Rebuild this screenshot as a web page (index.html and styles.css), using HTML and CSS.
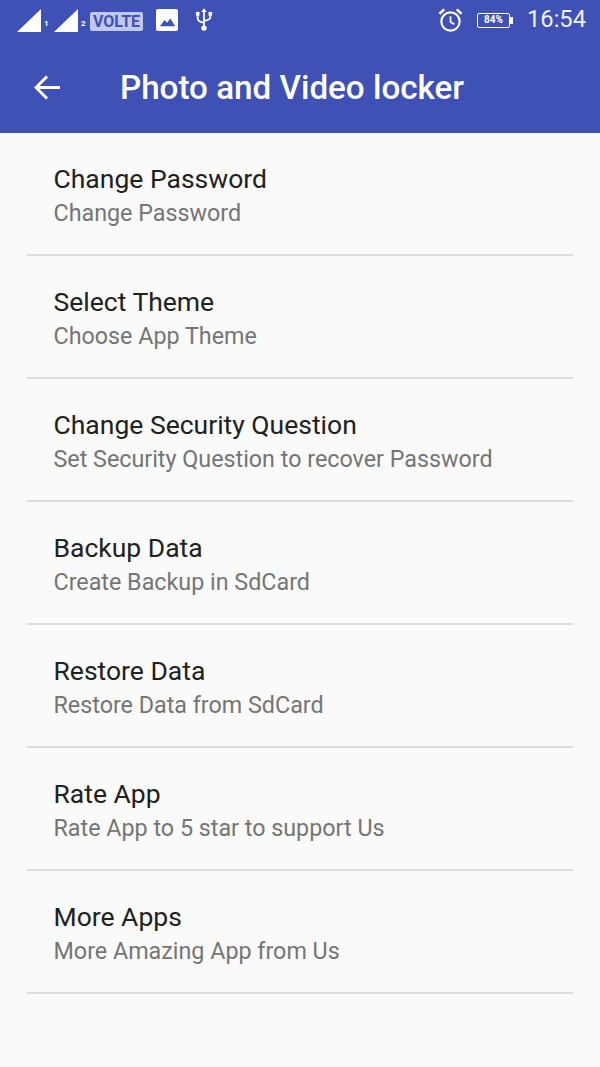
FILE: index.html
```html
<!DOCTYPE html>
<html lang="en">
<head>
<meta charset="utf-8">
<title>Photo and Video locker</title>
<link rel="stylesheet" href="styles.css">
</head>
<body>
<header class="header">
  <div class="status">
    <div class="status-left">
      <svg class="sig" width="25" height="23" viewBox="0 0 25 23"><path d="M0 23L24 0V23Z" fill="#fff"/></svg>
      <span class="sim">1</span>
      <svg class="sig" width="25" height="23" viewBox="0 0 25 23"><path d="M0 23L24 0V23Z" fill="#fff"/></svg>
      <span class="sim sim-last">2</span>
      <span class="volte">VOLTE</span>
      <svg class="pic" width="22" height="22" viewBox="0 0 23 23"><rect width="23" height="23" rx="2" fill="#fff"/><path d="M4 18L9 11.500L11.500 14.500L15 10L20 18Z" fill="#3f51b5"/></svg>
      <svg class="usb" width="18" height="24" viewBox="0 0 20 26"><g fill="none" stroke="#fff" stroke-width="2"><path d="M10 4V22"/><path d="M3 7V11Q3 15 10 16"/><path d="M17 7V10Q17 13 10 14"/></g><circle cx="10" cy="22" r="3" fill="#fff"/><path d="M10 0L13 4H7Z" fill="#fff"/><rect x="1" y="4" width="4" height="4" fill="#fff"/><rect x="15" y="4" width="4" height="4" fill="#fff"/></svg>
    </div>
    <div class="status-right">
      <svg class="alarm" width="25" height="25" viewBox="0 0 26 26"><circle cx="13" cy="14" r="9.500" fill="none" stroke="#fff" stroke-width="2.200"/><path d="M13 8.500V14.500L17 17" fill="none" stroke="#fff" stroke-width="1.800"/><path d="M1.500 6L6.500 1.500M24.500 6L19.500 1.500" stroke="#fff" stroke-width="2.600"/></svg>
      <span class="battery"><span class="battery-text">84%</span></span>
      <span class="battery-tip"></span>
      <span class="time">16:54</span>
    </div>
  </div>
  <div class="appbar">
    <svg class="back" width="26" height="25" viewBox="0 0 26 25"><path d="M26 12.500H3M13 1.500L2 12.500L13 23.500" fill="none" stroke="#fff" stroke-width="3"/></svg>
    <h1 class="title">Photo and Video locker</h1>
  </div>
</header>
<main class="list">
  <div class="item"><div class="item-title">Change Password</div><div class="item-sub">Change Password</div></div>
  <div class="item"><div class="item-title">Select Theme</div><div class="item-sub">Choose App Theme</div></div>
  <div class="item"><div class="item-title">Change Security Question</div><div class="item-sub">Set Security Question to recover Password</div></div>
  <div class="item"><div class="item-title">Backup Data</div><div class="item-sub">Create Backup in SdCard</div></div>
  <div class="item"><div class="item-title">Restore Data</div><div class="item-sub">Restore Data from SdCard</div></div>
  <div class="item"><div class="item-title">Rate App</div><div class="item-sub">Rate App to 5 star to support Us</div></div>
  <div class="item"><div class="item-title">More Apps</div><div class="item-sub">More Amazing App from Us</div></div>
</main>
</body>
</html>
```
FILE: styles.css
```css
* { box-sizing: border-box; }
html, body { margin: 0; padding: 0; }
body {
  width: 600px;
  height: 1067px;
  overflow: hidden;
  background: #fafafa;
  font-family: Roboto, "Liberation Sans", sans-serif;
}
.header {
  height: 133px;
  background: #3f51b5;
  color: #fff;
  display: flex;
  flex-direction: column;
}
.status {
  height: 42px;
  display: flex;
  justify-content: space-between;
  align-items: center;
  padding: 0 14px 2px 17px;
}
.status-left, .status-right { display: flex; align-items: center; }
.sig { flex: none; }
.sim { font-size: 8px; font-weight: 700; line-height: 8px; align-self: flex-end; margin-bottom: 4px; width: 12px; padding-left: 2px; }
.sim-last { width: 11px; }
.volte {
  width: 53px;
  height: 19px;
  margin-top: 3px;
  background: #c0c8f0;
  color: #3f51b5;
  border-radius: 2px;
  font-size: 16px;
  font-weight: 700;
  line-height: 19px;
  text-align: center;
  white-space: nowrap;
}
.pic { margin-left: 13px; }
.usb { margin-left: 17px; }
.alarm { margin-right: 14px; }
.battery {
  width: 33px;
  height: 15px;
  border: 1.500px solid #fff;
  border-radius: 2px;
  display: flex;
  align-items: center;
  justify-content: center;
}
.battery-text { font-size: 10px; font-weight: 700; line-height: 1; }
.battery-tip { width: 3px; height: 7px; background: #fff; margin-right: 14px; }
.time { font-size: 23.700px; line-height: 1; color: #eef0fa; }
.appbar {
  flex: 1;
  display: flex;
  align-items: center;
  padding: 0 0 0 34px;
}
.back { flex: none; margin-top: -1px; }
.title {
  margin: 0 0 0 60px;
  font-size: 33.200px;
  font-weight: 500;
  line-height: 1;
  white-space: nowrap;
}
.list { padding: 0 27px; }
.item {
  height: 123px;
  padding: 29px 0 0 26.500px;
  border-bottom: 2px solid #dcdcdc;
}
.item-title {
  font-size: 26.500px;
  line-height: 34px;
  color: #212121;
}
.item-sub {
  font-size: 23.300px;
  line-height: 34px;
  color: #757575;
}
```
